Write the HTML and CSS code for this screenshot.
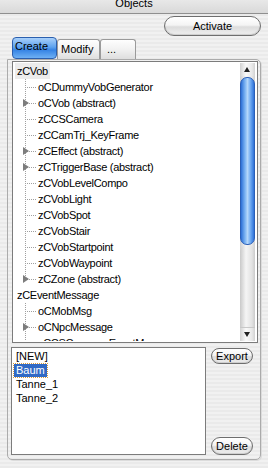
FILE: index.html
```html
<!DOCTYPE html>
<html>
<head>
    <meta charset="utf-8">
    <title>Objects</title>
    <link rel="stylesheet" href="styles.css">
</head>
<body>
    <div class="titlebar"><span>Objects</span></div>

    <div class="toolbar">
        <button class="pill activate">Activate</button>
    </div>

    <div class="tabs">
        <div class="tab active">Create</div>
        <div class="tab">Modify</div>
        <div class="tab dots">...</div>
    </div>

    <div class="panel">
        <div class="treebox">
            <div class="tree">
                <div class="root"><span class="label current">zCVob</span></div>
                <div class="node"><span class="twig"></span>oCDummyVobGenerator</div>
                <div class="node"><span class="twig"><i class="expander"></i></span>oCVob (abstract)</div>
                <div class="node"><span class="twig"></span>zCCSCamera</div>
                <div class="node"><span class="twig"></span>zCCamTrj_KeyFrame</div>
                <div class="node"><span class="twig"><i class="expander"></i></span>zCEffect (abstract)</div>
                <div class="node"><span class="twig"><i class="expander"></i></span>zCTriggerBase (abstract)</div>
                <div class="node"><span class="twig"></span>zCVobLevelCompo</div>
                <div class="node"><span class="twig"></span>zCVobLight</div>
                <div class="node"><span class="twig"></span>zCVobSpot</div>
                <div class="node"><span class="twig"></span>zCVobStair</div>
                <div class="node"><span class="twig"></span>zCVobStartpoint</div>
                <div class="node"><span class="twig"></span>zCVobWaypoint</div>
                <div class="node"><span class="twig last"><i class="expander"></i></span>zCZone (abstract)</div>
                <div class="root"><span class="label">zCEventMessage</span></div>
                <div class="node"><span class="twig"></span>oCMobMsg</div>
                <div class="node"><span class="twig"><i class="expander"></i></span>oCNpcMessage</div>
                <div class="node"><span class="twig"></span>zCCSCamera_EventMsg</div>
                <div class="node"><span class="twig"></span>zCCSCamera_EventMsgSync</div>
            </div>
            <div class="scrollbar">
                <div class="arrow up"></div>
                <div class="thumb"></div>
                <div class="track"></div>
                <div class="arrow down"></div>
            </div>
        </div>

        <div class="lower">
            <div class="listbox">
                <div class="item">[NEW]</div>
                <div class="item"><span class="picked">Baum</span></div>
                <div class="item">Tanne_1</div>
                <div class="item">Tanne_2</div>
            </div>
            <div class="side">
                <button class="pill small">Export</button>
                <button class="pill small delete">Delete</button>
            </div>
        </div>
    </div>
</body>
</html>
```

FILE: styles.css
```css
html, body {
    margin: 0;
    padding: 0;
}

body {
    width: 268px;
    height: 468px;
    overflow: hidden;
    font-family: "Liberation Sans", Arial, sans-serif;
    font-size: 11px;
    color: #000;
    background: repeating-linear-gradient(to bottom, #f1f1f1 0, #f1f1f1 2px, #eaeaea 2px, #eaeaea 4px);
}

.titlebar {
    height: 13px;
    border-bottom: 1px solid #8f8f8f;
    background: linear-gradient(#e8e8e8, #d9d9d9);
    text-align: center;
    overflow: hidden;
}

.titlebar span {
    display: block;
    line-height: 12px;
    margin-top: -3px;
}

.toolbar {
    display: flex;
    justify-content: flex-end;
    padding: 2px 7px 0 0;
}

.pill {
    font-family: "Liberation Sans", Arial, sans-serif;
    font-size: 11px;
    color: #000;
    padding: 0;
    border: 1px solid #6e6e6e;
    background: linear-gradient(#ffffff, #f4f4f4 45%, #dcdcdc 55%, #f0f0f0);
    box-shadow: inset 0 -1px 1px rgba(0, 0, 0, 0.15);
}

.activate {
    width: 97px;
    height: 20px;
    border-radius: 10px;
}

.tabs {
    display: flex;
    align-items: flex-end;
    height: 22px;
    margin: 1px 0 0 12px;
}

.tab {
    width: 43px;
    height: 19px;
    border: 1px solid #9a9a9a;
    border-bottom: none;
    border-radius: 3px 3px 0 0;
    background: linear-gradient(#fefefe, #f1f1f1 50%, #dedede);
    padding-left: 3px;
    line-height: 18px;
    box-sizing: border-box;
    height: 20px;
}

.tab.active {
    width: 45px;
    height: 22px;
    border: 1px solid #2b5fae;
    border-radius: 4px;
    background: linear-gradient(#a9d0fa, #5ea3ef 45%, #3583e4 60%, #6eb0f4);
    line-height: 16px;
    padding-left: 2px;
    position: relative;
    z-index: 1;
}

.tab.dots {
    width: 36px;
    padding-left: 6px;
}

.panel {
    margin-left: 7px;
    width: 254px;
    height: 401px;
    box-sizing: border-box;
    border: 1px solid #ababab;
    border-radius: 0 5px 5px 5px;
    box-shadow: 1px 1px 0 #dcdcdc;
    padding: 1px 2px 4px 4px;
}

.treebox {
    display: flex;
    height: 282px;
    box-sizing: border-box;
    border: 1px solid #7c7c7c;
    background: #fff;
    padding: 1px 2px 1px 0;
}

.tree {
    flex: 1;
    overflow: hidden;
    padding-left: 1px;
}

.root, .node {
    height: 16px;
    line-height: 16px;
    white-space: nowrap;
    letter-spacing: -0.3px;
}

.node {
    display: flex;
}

.label {
    display: inline-block;
    padding: 0 2px;
    margin-left: 1px;
}

.label.current {
    background: #ececec;
}

.twig {
    position: relative;
    width: 13px;
    height: 16px;
    margin-left: 11px;
    flex: none;
}

.twig::before {
    content: "";
    position: absolute;
    left: 0;
    top: 0;
    width: 1px;
    height: 16px;
    background: linear-gradient(#a0a0a0 50%, transparent 50%) 0 0 / 1px 2px;
}

.twig.last::before {
    height: 8px;
}

.twig::after {
    content: "";
    position: absolute;
    left: 1px;
    top: 8px;
    width: 11px;
    height: 1px;
    background: linear-gradient(to right, transparent 50%, #a0a0a0 50%) 0 0 / 2px 1px;
}

.expander {
    position: absolute;
    left: -2px;
    top: 4px;
    width: 0;
    height: 0;
    border-top: 4px solid transparent;
    border-bottom: 4px solid transparent;
    border-left: 6px solid #7d7d7d;
    z-index: 1;
}

.scrollbar {
    width: 15px;
    display: flex;
    flex-direction: column;
    background: linear-gradient(to right, #cfcfcf, #f7f7f7 40%, #e6e6e6 80%, #d0d0d0);
}

.arrow {
    height: 13px;
    flex: none;
    position: relative;
    background: linear-gradient(to right, #d2d2d2, #fafafa 40%, #e8e8e8 80%, #d2d2d2);
}

.arrow::after {
    content: "";
    position: absolute;
    left: 4px;
    width: 0;
    height: 0;
    border-left: 3px solid transparent;
    border-right: 3px solid transparent;
}

.arrow.up::after {
    top: 4px;
    border-bottom: 5px solid #222;
}

.arrow.down {
    border-top: 1px solid #c8c8c8;
}

.arrow.down::after {
    top: 4px;
    border-top: 5px solid #222;
}

.thumb {
    height: 168px;
    flex: none;
    margin-top: 1px;
    border-radius: 7px;
    box-sizing: border-box;
    border: 1px solid #2a5fb8;
    background: linear-gradient(to right, #2c6fd6, #78b1f2 30%, #b3d6fa 50%, #6aa6f0 75%, #2f72d9);
}

.track {
    flex: 1;
    border-radius: 7px 7px 0 0;
    background: linear-gradient(to right, #c9c9c9, #f5f5f5 40%, #e2e2e2 80%, #cbcbcb);
}

.lower {
    display: flex;
    height: 108px;
    margin-top: 4px;
}

.listbox {
    width: 195px;
    margin-left: -1px;
    box-sizing: border-box;
    border: 1px solid #7c7c7c;
    background: #fff;
    padding: 1px 0 0 1px;
}

.item {
    height: 14px;
    line-height: 14px;
    padding-left: 3px;
}

.picked {
    display: inline-block;
    margin-left: -2px;
    padding: 0 2px;
    height: 13px;
    line-height: 13px;
    background: #316ac5;
    color: #fff;
    outline: 1px dotted #d79a3c;
}

.side {
    display: flex;
    flex-direction: column;
    justify-content: space-between;
    margin-left: 5px;
    padding-top: 1px;
}

.small {
    width: 42px;
    height: 16px;
    border-radius: 9px;
}

.small.delete {
    height: 18px;
}
```
